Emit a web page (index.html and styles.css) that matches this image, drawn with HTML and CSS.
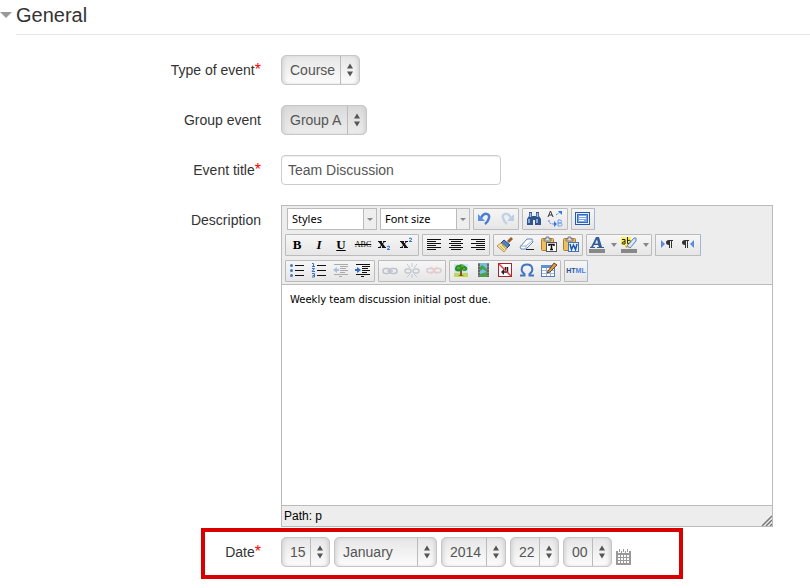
FILE: index.html
```html
<!DOCTYPE html>
<html lang="en">
<head>
<meta charset="utf-8">
<title>General</title>
<link rel="stylesheet" href="styles.css">
</head>
<body>
<form class="event-form">
  <header class="section-head">
    <svg class="twisty" viewBox="0 0 12 6" aria-hidden="true"><path d="M0 0H12L6 6z" fill="#999"/></svg>
    <h1>General</h1>
  </header>

  <div class="row">
    <label for="type">Type of event<b class="req">*</b></label>
    <span class="pick w-course"><select id="type"><option>Course</option></select><svg viewBox="0 0 8 14" aria-hidden="true"><path d="M1 5.500L4 .5L7 5.500zM1 8.500H7L4 13.500z"/></svg></span>
  </div>
  <div class="row">
    <label for="group">Group event</label>
    <span class="pick muted w-group"><select id="group"><option>Group A</option></select><svg viewBox="0 0 8 14" aria-hidden="true"><path d="M1 5.500L4 .5L7 5.500zM1 8.500H7L4 13.500z"/></svg></span>
  </div>
  <div class="row">
    <label for="title">Event title<b class="req">*</b></label>
    <input class="text" id="title" type="text" value="Team Discussion">
  </div>
  <div class="row editor-row">
    <label for="desc">Description</label>
    <div class="editor">
      <div class="toolbar">
        <div class="tools first">
          <span class="list"><select aria-label="Styles"><option>Styles</option></select><svg viewBox="0 0 12 20" aria-hidden="true"><path d="M3 9H9L6 12z" fill="#888"/></svg></span>
          <span class="list"><select aria-label="Font size"><option>Font size</option></select><svg viewBox="0 0 12 20" aria-hidden="true"><path d="M3 9H9L6 12z" fill="#888"/></svg></span>
          <div class="group">
            <button type="button" aria-label="Undo"><svg viewBox="0 0 22 20"><path d="M7 9C10 3 16 4 15 9Q14 13 11 15" fill="none" stroke="#4a7bd0" stroke-width="2.500"/><path d="M4 5V12H11z" fill="#5d8fe0"/></svg></button>
            <button type="button" aria-label="Redo"><svg viewBox="0 0 22 20"><path d="M15 9C12 3 6 4 7 9Q8 13 11 15" fill="none" stroke="#c3d1e5" stroke-width="2.500"/><path d="M18 5V12H11z" fill="#bccde6"/></svg></button>
          </div>
          <div class="group">
            <button type="button" aria-label="Find"><svg viewBox="0 0 22 20"><path d="M6 3H9V7H13V3H16V7L18 10V16H12V11H10V16H4V10L6 7z" fill="#31568f"/><path d="M7.500 4V8M14.500 4V8M6 10V14M14 10V14" stroke="#a9c4ec" stroke-width="1.500"/></svg></button>
            <button type="button" aria-label="Find and replace"><svg viewBox="0 0 22 20"><path d="M3 8L5.500 2L8 8M4 6H7" fill="none" stroke="#333"/><path d="M13 11V17H15.500Q17 17 17 15.500T15.500 14H13H15Q16.500 14 16.500 12.500T15 11z" fill="none" stroke="#6d9af0"/><path d="M4 11V13Q5 15 9 15M11 6L15 3" fill="none" stroke="#4f80df" stroke-dasharray="2 1"/><path d="M13 2H17V6zM9 12V18L12 15z" fill="#3876e5"/></svg></button>
          </div>
          <div class="group edge">
            <button type="button" aria-label="Full screen"><svg viewBox="0 0 22 20"><rect x="3.500" y="3.500" width="14" height="12" fill="#e4efff" stroke="#2857a8"/><rect x="5.500" y="5.500" width="10" height="8" fill="#79a6ee" stroke="#3668bb"/><path d="M7 7.500H14M7 9.500H14M7 11.500H12" stroke="#fff"/></svg></button>
          </div>
        </div>

        <div class="tools">
          <div class="group">
            <button type="button" class="serif">B</button>
            <button type="button" class="serif italic">I</button>
            <button type="button" class="serif underline">U</button>
            <button type="button" class="strike">ABC</button>
            <button type="button" aria-label="Subscript"><svg viewBox="0 0 22 20"><path d="M4 6H7L12 13H9z" fill="#111"/><path d="M11 6L5 13M4 6.500H8M9 6.500H12M4 12.500H7M8 12.500H12" stroke="#111"/><path d="M13 11.500Q16 10 15.500 12.500L13 14.500H16" fill="none" stroke="#3772cc"/></svg></button>
            <button type="button" aria-label="Superscript"><svg viewBox="0 0 22 20"><path d="M4 6H7L12 13H9z" fill="#111"/><path d="M11 6L5 13M4 6.500H8M9 6.500H12M4 12.500H7M8 12.500H12" stroke="#111"/><path d="M13 3.500Q16 2 15.500 4.500L13 6.500H16" fill="none" stroke="#3772cc"/></svg></button>
          </div>
          <div class="group">
            <button type="button" aria-label="Align left"><svg viewBox="0 0 22 20"><path d="M4 4.500H18M4 6.500H13M4 8.500H18M4 10.500H13M4 12.500H18M4 14.500H13" stroke="#111"/></svg></button>
            <button type="button" aria-label="Align center"><svg viewBox="0 0 22 20"><path d="M4 4.500H18M6 6.500H16M4 8.500H18M6 10.500H16M4 12.500H18M6 14.500H16" stroke="#111"/></svg></button>
            <button type="button" aria-label="Align right"><svg viewBox="0 0 22 20"><path d="M4 4.500H18M9 6.500H18M4 8.500H18M9 10.500H18M4 12.500H18M9 14.500H18" stroke="#111"/></svg></button>
          </div>
          <div class="group">
            <button type="button" aria-label="Clean up"><svg viewBox="0 0 22 20"><path d="M13 6L17 2L19 4L15 8z" fill="#9a5d2b"/><path d="M10 5L16 10L13 13L7 8z" fill="#4f80c0" stroke="#274b84"/><path d="M7 8L13 13L10 17L3 11z" fill="#f4e3a0" stroke="#b99549"/><path d="M6 11L10 15M8 10L12 14" stroke="#c9a94f"/></svg></button>
            <button type="button" aria-label="Remove formatting"><svg viewBox="0 0 22 20"><path d="M4 12L11 4H16L17 7L10 14H5z" fill="#fff" stroke="#6284b4"/><path d="M4 11H10L17 5M10 11V14" fill="none" stroke="#8caeda"/><path d="M10 14.500H18" stroke="#222"/></svg></button>
            <button type="button" aria-label="Paste as text"><svg viewBox="0 0 22 20"><rect x="3.500" y="3.500" width="12" height="12" rx="1" fill="#edbf5e" stroke="#b47b21"/><path d="M6 6V4H8V2H11V4H13V6z" fill="#ddd" stroke="#777"/><rect x="8.500" y="7.500" width="10" height="9" fill="#fff" stroke="#555"/><path d="M11 11V9.500H16V11M13.500 9.500V14.500M12 14.500H15" fill="none" stroke="#111" stroke-width="1.500"/></svg></button>
            <button type="button" aria-label="Paste from Word"><svg viewBox="0 0 22 20"><rect x="3.500" y="3.500" width="12" height="12" rx="1" fill="#edbf5e" stroke="#b47b21"/><path d="M6 6V4H8V2H11V4H13V6z" fill="#ddd" stroke="#777"/><rect x="8.500" y="7.500" width="10" height="9" fill="#e8f1ff" stroke="#4574b5"/><path d="M10 9L11.500 14.500L13.500 10L15.500 14.500L17 9" fill="none" stroke="#1e57a8" stroke-width="1.500"/></svg></button>
          </div>
          <div class="group">
            <button type="button" aria-label="Text color"><svg viewBox="0 0 22 20"><path d="M4 12L9 2H12L15 12H17V13H10V12H12L11 10H7L6 12H8V13H3V12zM8 8.500H11L10 4.500z" fill="#355d99" fill-rule="evenodd"/><path d="M2 14H18V18H2z" fill="#888"/></svg></button>
            <button type="button" class="more" aria-label="More text colors"><svg viewBox="0 0 10 20"><path d="M2 8H8L5 12z" fill="#888"/></svg></button>
            <button type="button" aria-label="Highlight color"><svg viewBox="0 0 22 20"><path d="M2 2H12V10H2z" fill="#fff04a"/><path d="M3 4.500H6V9H4Q3 9 3 8T6 6.500M8.500 2V8.500H10Q11.500 8.500 11.500 6.500T8.500 5.500" fill="none" stroke="#222"/><path d="M15 3H17V6L11 13L8 11z" fill="#d8e8fc" stroke="#5b7fb2"/><path d="M6 10L10 12L7 13z" fill="#d9aa35"/><path d="M2 14H18V18H2z" fill="#888"/></svg></button>
            <button type="button" class="more" aria-label="More highlight colors"><svg viewBox="0 0 10 20"><path d="M2 8H8L5 12z" fill="#888"/></svg></button>
          </div>
          <div class="group edge">
            <button type="button" aria-label="Left to right"><svg viewBox="0 0 22 20"><path d="M5 5L9 9L5 13z" fill="#5b8be0"/><path d="M17 5V6H16V13H15V6H14V13H13V10Q10 10 10 7.500T13 5z" fill="#333"/></svg></button>
            <button type="button" aria-label="Right to left"><svg viewBox="0 0 22 20"><path d="M16 5L12 9L16 13z" fill="#5b8be0"/><path d="M11 5V6H10V13H9V6H8V13H7V10Q4 10 4 7.500T7 5z" fill="#333"/></svg></button>
          </div>
        </div>

        <div class="tools">
          <div class="group">
            <button type="button" aria-label="Bulleted list"><svg viewBox="0 0 22 20"><path d="M9 4.500H18M9 9.500H18M9 14.500H18" stroke="#111"/><circle cx="5.500" cy="4.500" r="1.500" fill="#4776b9"/><circle cx="5.500" cy="9.500" r="1.500" fill="#4776b9"/><circle cx="5.500" cy="14.500" r="1.500" fill="#4776b9"/></svg></button>
            <button type="button" aria-label="Numbered list"><svg viewBox="0 0 22 20"><path d="M9 4.500H18M9 9.500H18M9 14.500H18" stroke="#111"/><path d="M4 2.500H5.500V5.500M4 5.500H7M4 7.500H6.500L4 10.500H7M4 12.500H6.500V16H4M4.500 14.500H6" fill="none" stroke="#3670c8"/></svg></button>
            <button type="button" aria-label="Outdent"><svg viewBox="0 0 22 20"><path d="M4 3.500H18M10 5.500H18M10 7.500H16M10 9.500H18M10 11.500H15M4 13.500H18M9 15.500H12" stroke="#aaa"/><path d="M3 9L7 6V8H9V10H7V12z" fill="#adc1dc"/></svg></button>
            <button type="button" aria-label="Indent"><svg viewBox="0 0 22 20"><path d="M4 3.500H18M10 5.500H18M10 7.500H16M10 9.500H18M10 11.500H15M4 13.500H18M9 15.500H12" stroke="#111" stroke-width="1.200"/><path d="M9 9L5 6V8H3V10H5V12z" fill="#346cc5"/></svg></button>
          </div>
          <div class="group">
            <button type="button" disabled aria-label="Insert link"><svg viewBox="0 0 22 20"><g fill="none" stroke="#bcc3cd" stroke-width="1.500"><rect x="4" y="7.500" width="7" height="5" rx="2.500"/><rect x="11" y="7.500" width="7" height="5" rx="2.500"/><path d="M8 10H14"/></g></svg></button>
            <button type="button" disabled aria-label="Unlink"><svg viewBox="0 0 22 20"><g fill="none" stroke="#c3c9d1"><rect x="4" y="8" width="6" height="4" rx="2" stroke-width="1.500"/><rect x="12" y="8" width="6" height="4" rx="2" stroke-width="1.500"/><path d="M9 7L6 3M11 6V2M13 7L16 3M9 13L6 16M11 13V17M13 13L16 16"/></g></svg></button>
            <button type="button" disabled aria-label="Prevent automatic linking"><svg viewBox="0 0 22 20"><g fill="none" stroke="#d4cdd1" stroke-width="1.500"><rect x="4" y="7.500" width="7" height="4" rx="2"/><rect x="11" y="7.500" width="7" height="4" rx="2"/><path d="M8 13L14 6M8 6L14 13" stroke="#efc9cd"/></g></svg></button>
          </div>
          <div class="group">
            <button type="button" aria-label="Insert image"><svg viewBox="0 0 22 20"><path d="M4 3H18V16H4z" fill="#c8e6fa"/><path d="M4 12H18V16H4z" fill="#c3d552"/><path d="M10 9H12V14L14 15H8L10 14z" fill="#805523"/><path d="M5 8Q5 4 9 4Q12 2 15 5Q18 6 17 9Q14 11 12 9Q8 12 5 9z" fill="#2f8d22"/><path d="M7 7H10M11 5H14M13 8H15" stroke="#85cb3c"/></svg></button>
            <button type="button" aria-label="Insert media"><svg viewBox="0 0 22 20"><path d="M6 2H17V16H6z" fill="#888"/><path d="M8 2H15V16H8z" fill="#79bfe0"/><path d="M8 6L10 4L15 8V11L11 8L8 10zM8 13L15 11V16H8z" fill="#47a04a"/><path d="M7 3V16M16 3V16" stroke="#444" stroke-dasharray="2 1"/></svg></button>
            <button type="button" aria-label="Nonbreaking space"><svg viewBox="0 0 22 20"><rect x="4.500" y="2.500" width="13" height="13" fill="#fff" stroke="#a5262d"/><path d="M13.500 6V11H8M11.500 6V9" fill="none" stroke="#222" stroke-width="1.500"/><path d="M7 11L10 8V14z" fill="#222"/><path d="M5 3L17 15" stroke="#e13434" stroke-width="1.500"/></svg></button>
            <button type="button" aria-label="Special character"><svg viewBox="0 0 22 20"><path d="M4 14.500H8.500V13C4 10 5 3.500 11 3.500S18 10 13.500 13V14.500H18" fill="none" stroke="#4274c4" stroke-width="2"/></svg></button>
            <button type="button" aria-label="Insert table"><svg viewBox="0 0 22 20"><rect x="3.500" y="4.500" width="13" height="11" fill="#fff" stroke="#5180bd"/><path d="M3 4H17V7H3z" fill="#5f91d2"/><path d="M4 9.500H16M4 12.500H16M8.500 7V15M12.500 7V15" stroke="#9ab8de"/><path d="M10 10L16 2L19 4L12 11L9 12z" fill="#d79b4e" stroke="#734719"/></svg></button>
          </div>
          <div class="group edge"><button type="button" class="html">HT<span>ML</span></button></div>
        </div>
      </div>
      <textarea id="desc">Weekly team discussion initial post due.</textarea>
      <footer class="status"><span>Path: p</span><svg viewBox="0 0 12 12" aria-hidden="true"><path d="M2 12L12 2M6 12L12 6M10 12L12 10" stroke="#777" stroke-width="1.500"/></svg></footer>
    </div>
  </div>

  <div class="row callout" role="group" aria-label="Date">
    <label for="day">Date<b class="req">*</b></label>
    <div class="date">
      <span class="pick w-short"><select id="day"><option>15</option></select><svg viewBox="0 0 8 14" aria-hidden="true"><path d="M1 5.500L4 .5L7 5.500zM1 8.500H7L4 13.500z"/></svg></span>
      <span class="pick w-month"><select aria-label="Month"><option>January</option></select><svg viewBox="0 0 8 14" aria-hidden="true"><path d="M1 5.500L4 .5L7 5.500zM1 8.500H7L4 13.500z"/></svg></span>
      <span class="pick w-year"><select aria-label="Year"><option>2014</option></select><svg viewBox="0 0 8 14" aria-hidden="true"><path d="M1 5.500L4 .5L7 5.500zM1 8.500H7L4 13.500z"/></svg></span>
      <span class="pick w-short"><select aria-label="Hour"><option>22</option></select><svg viewBox="0 0 8 14" aria-hidden="true"><path d="M1 5.500L4 .5L7 5.500zM1 8.500H7L4 13.500z"/></svg></span>
      <span class="pick w-short"><select aria-label="Minute"><option>00</option></select><svg viewBox="0 0 8 14" aria-hidden="true"><path d="M1 5.500L4 .5L7 5.500zM1 8.500H7L4 13.500z"/></svg></span>
      <button type="button" class="calendar" aria-label="Calendar"><svg viewBox="0 0 15 16"><path d="M0 2H2V4H5V2H6V4H9V2H10V4H13V2H15V16H0z" fill="#999"/><path d="M3.500 0V3M7.500 0V3M11.500 0V3" stroke="#999"/><path d="M2 6H4V8H2zM5 6H7V8H5zM8 6H10V8H8zM11 6H13V8H11zM2 9H4V11H2zM5 9H7V11H5zM8 9H10V11H8zM11 9H13V11H11zM2 12H4V14H2zM5 12H7V14H5zM8 12H10V14H8zM11 12H13V14H11z" fill="#fff"/></svg></button>
    </div>
  </div>
</form>
</body>
</html>
```
FILE: styles.css
```css
* { box-sizing: border-box; }

body {
  margin: 0;
  background: #fff;
  color: #333;
  font: 14px/20px "Liberation Sans", Arial, sans-serif;
}

svg { display: block; }
button, select, input, textarea { margin: 0; font: inherit; color: inherit; }

.section-head {
  display: flex;
  align-items: center;
  gap: 4px;
  height: 34px;
  padding-bottom: 5px;
}
.twisty { width: 12px; height: 6px; }
h1 {
  flex: 1;
  margin: 0;
  font-size: 20px;
  font-weight: normal;
  line-height: 30px;
}
.section-head + .row { position: relative; margin-top: 21px; }
.section-head + .row::before {
  content: "";
  position: absolute;
  top: -21px;
  left: 16px;
  right: 0;
  border-top: 1px solid #e5e5e5;
}

.row {
  display: grid;
  grid-template-columns: 261px minmax(0, 1fr);
  column-gap: 20px;
  margin-bottom: 20px;
}
.row > label { padding-top: 5px; text-align: right; }
.req { color: #f00; font-size: 16px; font-weight: normal; line-height: 16px; }

.pick {
  position: relative;
  display: flex;
  height: 30px;
  border: 1px solid #c6c6c6;
  border-radius: 5px;
  background: linear-gradient(#e6e6e6, #fcfcfc);
  box-shadow: inset 3px 0 4px -2px #ccc, inset -3px 0 4px -2px #ccc;
  color: #555;
}
.pick.muted { background: linear-gradient(#dadada, #ececec); }
.pick select {
  appearance: none;
  width: 100%;
  padding: 0 20px 0 8px;
  border: 0;
  background: none;
}
.pick svg {
  position: absolute;
  top: 0;
  right: 0;
  width: 19px;
  height: 28px;
  padding: 7px 5px;
  border-left: 1px solid #bbb;
  fill: #555;
  pointer-events: none;
}
.w-course { width: 79px; }
.w-group { width: 86px; }
.w-short { width: 49px; }
.w-month { width: 103px; }
.w-year { width: 65px; }

.text {
  width: 220px;
  height: 30px;
  padding: 0 6px;
  border: 1px solid #ccc;
  border-radius: 4px;
  box-shadow: inset 0 1px 1px #eee;
  color: #555;
}

.editor-row { margin-bottom: 0; }
.editor {
  max-width: 492px;
  border: 1px solid #bbb;
  background: #ededed;
  color: #000;
}
.toolbar {
  display: flex;
  flex-direction: column;
  gap: 4px;
  padding: 2px 3px;
  border-bottom: 1px solid #bbb;
}
.tools { display: flex; gap: 3px; height: 22px; }
.tools.first { padding-left: 2px; }
.list {
  position: relative;
  width: 90px;
  border: 1px solid #bbb;
  background: #fff;
}
.list select {
  appearance: none;
  display: block;
  width: 100%;
  height: 20px;
  padding: 0 14px 0 4px;
  border: 0;
  background: none;
  font: 11px/16px "Noto Sans", sans-serif;
}
.list svg {
  position: absolute;
  top: 0;
  right: 0;
  width: 13px;
  height: 20px;
  border-left: 1px solid #bbb;
  background: #eee;
  pointer-events: none;
}
.group {
  display: flex;
  border: 1px solid #bbb;
  border-radius: 1px;
  background: linear-gradient(#f6f6f6, #e6e6e6);
}
.group.edge { border-right-color: #9fb6dc; }
.group button {
  display: flex;
  align-items: center;
  justify-content: center;
  width: 22px;
  height: 20px;
  padding: 0;
  border: 0;
  background: none;
  line-height: 20px;
}
.group svg { width: 22px; height: 20px; }
.group .more { width: 10px; }
.group .more svg { width: 10px; }
.group .serif { font: bold 13px/20px "Liberation Serif", serif; }
.group .italic { font-style: italic; }
.group .underline { text-decoration: underline; }
.group .strike { font: 8px/20px "Liberation Serif", serif; text-decoration: line-through; }
.group .html { color: #24508f; font: bold 7px/20px "Liberation Sans", sans-serif; }
.html span { color: #4a80d8; }

textarea {
  display: block;
  width: 100%;
  height: 220px;
  padding: 8px;
  border: 0;
  background: #fff;
  font: 10px/14px "DejaVu Sans", Verdana, sans-serif;
  resize: none;
}
.status {
  display: flex;
  align-items: flex-end;
  justify-content: space-between;
  height: 21px;
  padding-left: 2px;
  border-top: 1px solid #bbb;
  font-size: 12px;
}
.status svg { width: 12px; height: 12px; }

.callout {
  grid-template-columns: 56px auto;
  width: fit-content;
  margin: 1px 0 0 201px;
  padding: 5px 48px 8px 0;
  border: 4px solid #d90000;
}
.date { display: flex; gap: 4px; }
.calendar {
  align-self: flex-end;
  margin-bottom: 2px;
  padding: 0;
  border: 0;
  background: none;
}
.calendar svg { width: 15px; height: 16px; }
```
